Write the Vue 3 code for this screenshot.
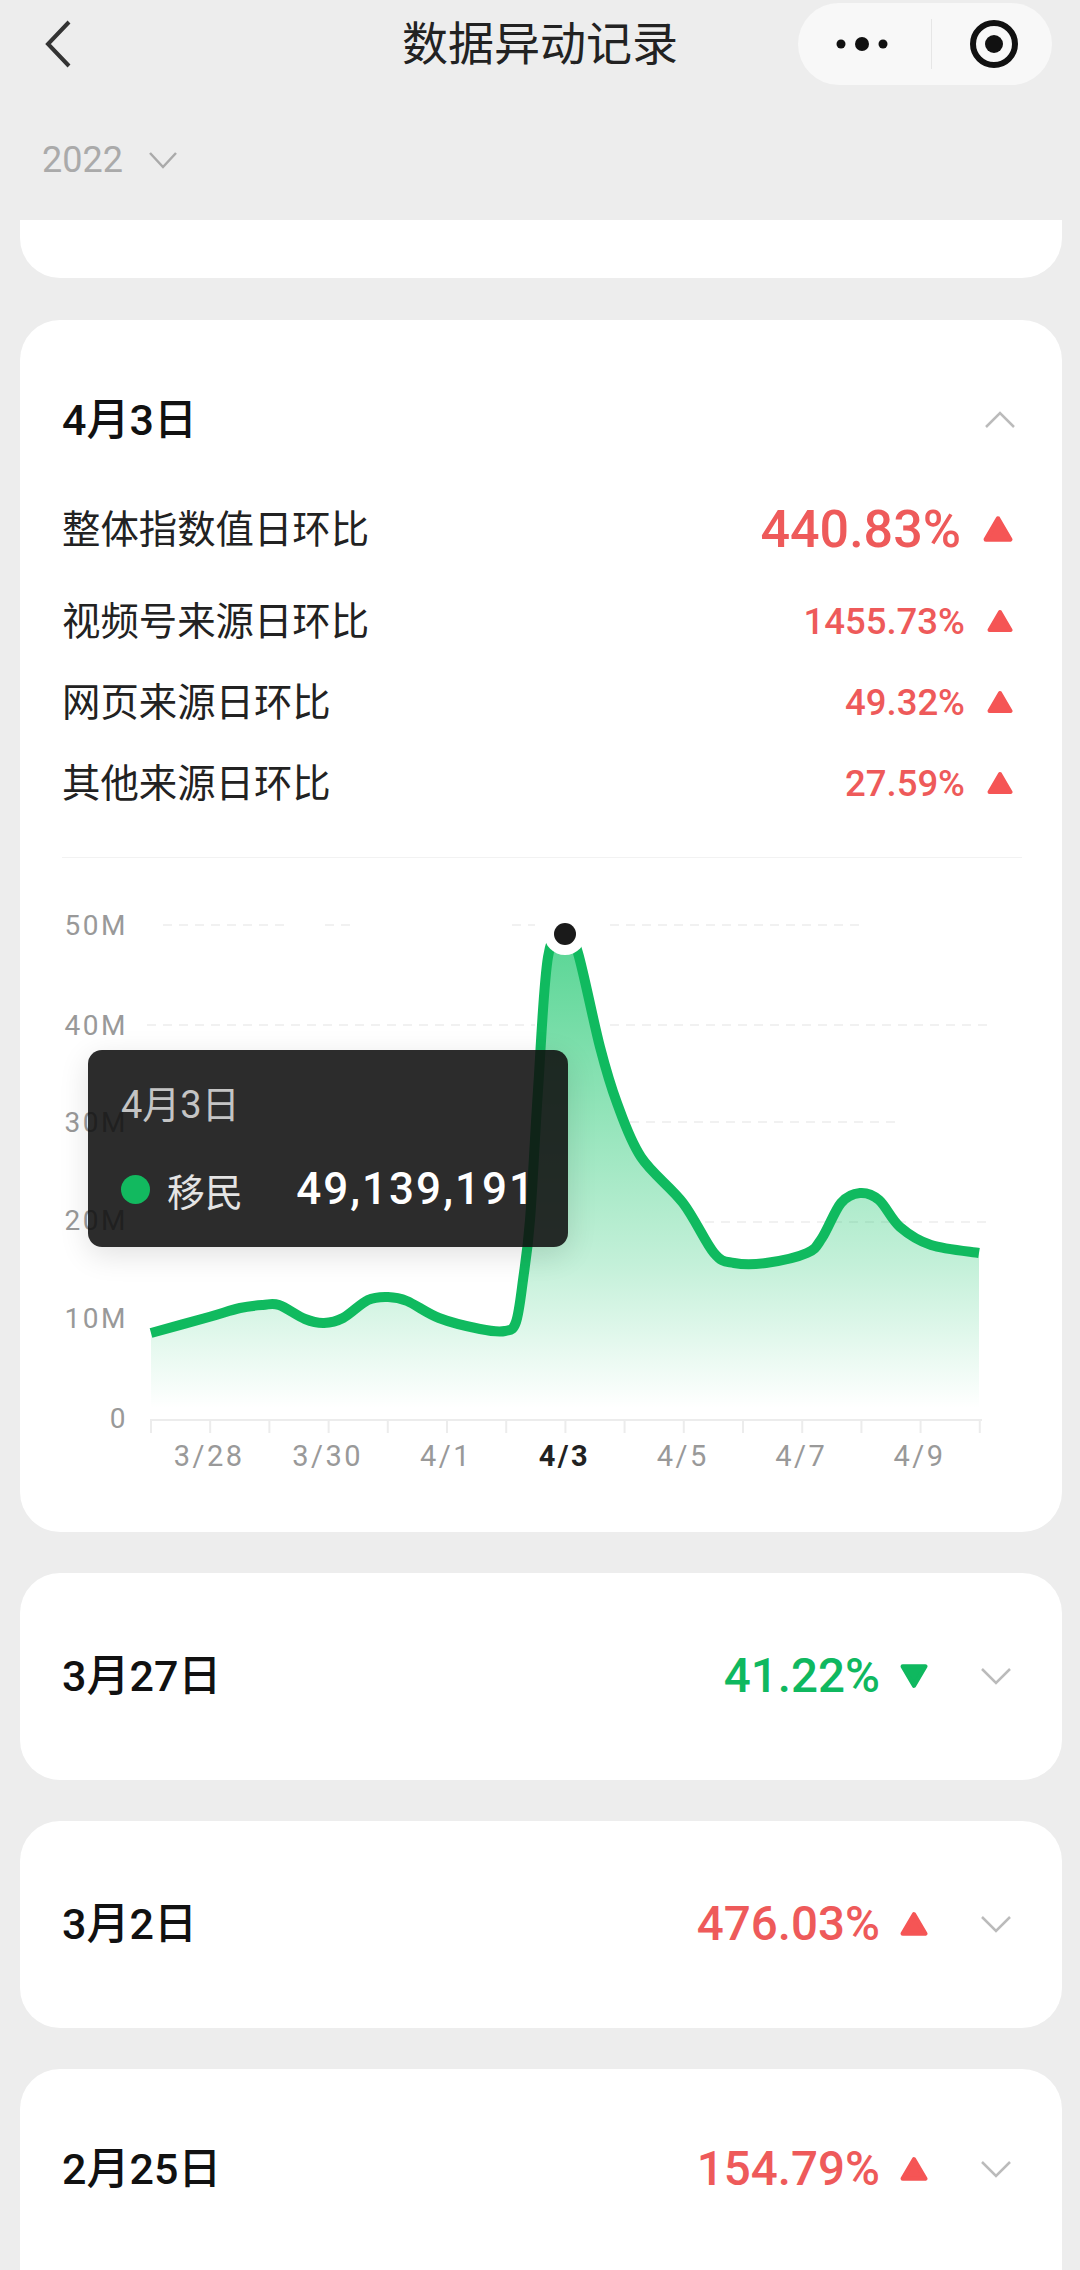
<script setup>
const details = [
  { label: '整体指数值日环比', value: '440.83%', main: true },
  { label: '视频号来源日环比', value: '1455.73%' },
  { label: '网页来源日环比', value: '49.32%' },
  { label: '其他来源日环比', value: '27.59%' },
]

const collapsed = [
  { date: '3月27日', value: '41.22%', down: true },
  { date: '3月2日', value: '476.03%' },
  { date: '2月25日', value: '154.79%' },
]

const yLabels = [
  { text: '50M', y: 925 },
  { text: '40M', y: 1025 },
  { text: '30M', y: 1122 },
  { text: '20M', y: 1220 },
  { text: '10M', y: 1318 },
  { text: '0', y: 1418 },
]

const xLabels = [
  { text: '3/28', i: 1 },
  { text: '3/30', i: 3 },
  { text: '4/1', i: 5 },
  { text: '4/3', i: 7, active: true },
  { text: '4/5', i: 9 },
  { text: '4/7', i: 11 },
  { text: '4/9', i: 13 },
]

const tickX = (i) => 151 + i * 59.2
const ticks = Array.from({ length: 15 }, (_, i) => tickX(i))

// the grid is only partly visible in the design, so keep the segments
const grid = [
  { y: 925, segs: [[163, 290], [325, 355], [512, 535], [610, 865]] },
  { y: 1025, segs: [[147, 535], [610, 990]] },
  { y: 1122, segs: [[630, 895]] },
  { y: 1222, segs: [[705, 990]] },
]

const points = [
  [151, 1333], [209, 1317], [240, 1308], [263, 1305], [279, 1305], [305, 1319], [324, 1323], [343, 1318],
  [368, 1300], [388, 1297], [407, 1301], [439, 1318], [480, 1329], [505, 1331], [516, 1322],
  [523, 1280], [530, 1220], [538, 1090], [548, 957], [565, 928], [578, 953], [600, 1047],
  [617, 1103], [641, 1157], [683, 1203], [714, 1253], [734, 1263], [766, 1263], [807, 1253],
  [822, 1238], [841, 1203], [860, 1193], [879, 1200], [900, 1227], [931, 1245], [979, 1253],
]

function smooth(pts) {
  let d = `M${pts[0][0]} ${pts[0][1]}`
  for (let i = 0; i < pts.length - 1; i++) {
    const p0 = pts[Math.max(i - 1, 0)]
    const p1 = pts[i]
    const p2 = pts[i + 1]
    const p3 = pts[Math.min(i + 2, pts.length - 1)]
    const c1x = p1[0] + (p2[0] - p0[0]) / 6
    const c1y = p1[1] + (p2[1] - p0[1]) / 6
    const c2x = p2[0] - (p3[0] - p1[0]) / 6
    const c2y = p2[1] - (p3[1] - p1[1]) / 6
    d += ` C${c1x.toFixed(1)} ${c1y.toFixed(1)} ${c2x.toFixed(1)} ${c2y.toFixed(1)} ${p2[0]} ${p2[1]}`
  }
  return d
}

const linePath = smooth(points)
const areaPath = `${linePath} L979 1408 L151 1408 Z`
</script>

<template>
  <div class="page">
    <header class="nav">
      <svg class="nav__back" width="30" height="50" viewBox="0 0 30 50">
        <path d="M26 3 L5 25 L26 47" fill="none" stroke="#333" stroke-width="4" />
      </svg>
      <h1 class="nav__title">数据异动记录</h1>
      <div class="capsule">
        <svg width="54" height="20" viewBox="0 0 54 20">
          <circle cx="6" cy="10" r="4.5" fill="#111" />
          <circle cx="27" cy="10" r="7" fill="#111" />
          <circle cx="48" cy="10" r="4.5" fill="#111" />
        </svg>
        <span class="capsule__sep" />
        <svg width="50" height="50" viewBox="0 0 50 50">
          <circle cx="25" cy="25" r="21" fill="none" stroke="#111" stroke-width="6" />
          <circle cx="25" cy="25" r="9" fill="#111" />
        </svg>
      </div>
    </header>

    <div class="year">
      <span>2022</span>
      <svg width="30" height="18" viewBox="0 0 30 18">
        <path d="M2 2 L15 16 L28 2" fill="none" stroke="#aaa" stroke-width="2.5" />
      </svg>
    </div>

    <div class="list">
      <section class="card card--stub" />

      <section class="card card--open">
        <div class="open-head">
          <span class="date">4月3日</span>
          <svg width="32" height="18" viewBox="0 0 32 18">
            <path d="M2 16 L16 2 L30 16" fill="none" stroke="#bbb" stroke-width="2.5" />
          </svg>
        </div>

        <div class="rows">
          <div v-for="row in details" :key="row.label" class="row" :class="{ 'row--main': row.main }">
            <span class="row__label">{{ row.label }}</span>
            <span class="row__value">{{ row.value }}</span>
            <svg class="tri" :width="row.main ? 30 : 26" :height="row.main ? 28 : 24" viewBox="0 0 26 24">
              <path d="M13 3 L23.5 21 L2.5 21 Z" fill="#f55555" stroke="#f55555" stroke-width="4" stroke-linejoin="round" />
            </svg>
          </div>
        </div>

        <div class="divider" />

        <div class="chart">
          <svg width="1042" height="674" viewBox="20 858 1042 674">
            <defs>
              <linearGradient id="areaFill" gradientUnits="userSpaceOnUse" x1="0" y1="930" x2="0" y2="1408">
                <stop offset="0" stop-color="#07c160" stop-opacity="0.68" />
                <stop offset="0.7" stop-color="#07c160" stop-opacity="0.24" />
                <stop offset="1" stop-color="#07c160" stop-opacity="0" />
              </linearGradient>
            </defs>

            <g v-for="g in grid" :key="g.y">
              <line
                v-for="s in g.segs"
                :key="s[0]"
                :x1="s[0]"
                :x2="s[1]"
                :y1="g.y"
                :y2="g.y"
                stroke="#f1f1f1"
                stroke-width="2"
                stroke-dasharray="9 7"
              />
            </g>

            <text v-for="l in yLabels" :key="l.text" class="axis-y" x="128" :y="l.y + 10" text-anchor="end">{{ l.text }}</text>

            <line x1="150" x2="982" y1="1420" y2="1420" stroke="#ececec" stroke-width="2" />
            <line v-for="t in ticks" :key="t" :x1="t" :x2="t" y1="1420" y2="1433" stroke="#ececec" stroke-width="2" />
            <text
              v-for="l in xLabels"
              :key="l.text"
              class="axis-x"
              :class="{ 'axis-x--active': l.active }"
              :x="tickX(l.i) - 1"
              y="1466"
              text-anchor="middle"
            >{{ l.text }}</text>

            <path :d="areaPath" fill="url(#areaFill)" />
            <path :d="linePath" fill="none" stroke="#10ba5f" stroke-width="10" stroke-linejoin="round" />

            <circle cx="565" cy="934" r="21" fill="#fff" />
            <circle cx="565" cy="934" r="11" fill="#1a1a1a" />
          </svg>

          <div class="tooltip">
            <div class="tooltip__date">4月3日</div>
            <div class="tooltip__row">
              <span class="tooltip__dot" />
              <span class="tooltip__name">移民</span>
              <span class="tooltip__num">49,139,191</span>
            </div>
          </div>
        </div>
      </section>

      <section v-for="item in collapsed" :key="item.date" class="card card--row">
        <span class="date">{{ item.date }}</span>
        <span class="card__value" :class="{ 'is-down': item.down }">{{ item.value }}</span>
        <svg class="card__tri" width="28" height="26" viewBox="0 0 26 24">
          <path
            :d="item.down ? 'M13 21 L23.5 3 L2.5 3 Z' : 'M13 3 L23.5 21 L2.5 21 Z'"
            :fill="item.down ? '#0fb85f' : '#f55555'"
            :stroke="item.down ? '#0fb85f' : '#f55555'"
            stroke-width="4"
            stroke-linejoin="round"
          />
        </svg>
        <svg class="card__chevron" width="32" height="18" viewBox="0 0 32 18">
          <path d="M2 2 L16 16 L30 2" fill="none" stroke="#bbb" stroke-width="2.5" />
        </svg>
      </section>
    </div>
  </div>
</template>

<style>
body {
  background: #ededed;
}
</style>

<style scoped>
.page {
  height: 2270px;
  overflow: hidden;
  background: #ededed;
  font-family: Roboto, "Noto Sans CJK SC", sans-serif;
  color: #111;
}

.nav {
  display: grid;
  grid-template-columns: 1fr auto 1fr;
  align-items: center;
  height: 88px;
}

.nav__back {
  margin-left: 43px;
}

.nav__title {
  margin: 0;
  font-size: 46px;
  font-weight: 400;
  line-height: 88px;
  color: #222;
}

.capsule {
  justify-self: end;
  display: flex;
  align-items: center;
  width: 254px;
  height: 82px;
  margin-right: 28px;
  padding: 0 33px 0 37px;
  box-sizing: border-box;
  justify-content: space-between;
  border-radius: 41px;
  background: #f8f8f8;
}

.capsule__sep {
  width: 1px;
  height: 50px;
  margin-left: 4px;
  background: #e6e6e6;
}

.year {
  display: flex;
  align-items: center;
  gap: 25px;
  height: 60px;
  margin: 42px 0 30px 42px;
  font-size: 36px;
  color: #aaa;
}

.list {
  display: flex;
  flex-direction: column;
  gap: 41px;
  margin: 0 18px 0 20px;
}

.card {
  flex: none;
  background: #fff;
  border-radius: 40px;
}

.card--stub {
  height: 58px;
  margin-bottom: 1px;
  border-radius: 0 0 40px 40px;
}

.card--open {
  height: 1212px;
  padding-top: 70px;
  box-sizing: border-box;
}

.card--row {
  display: flex;
  align-items: center;
  height: 207px;
  padding: 0 50px 2px 42px;
  box-sizing: border-box;
}

.card--row:last-child {
  height: 300px;
  align-items: flex-start;
  padding-top: 70px;
}

.date {
  font-size: 43px;
  font-weight: 500;
  line-height: 60px;
  color: #111;
}

.open-head {
  display: flex;
  align-items: center;
  justify-content: space-between;
  height: 60px;
  padding: 0 46px 0 42px;
}

.rows {
  display: flex;
  flex-direction: column;
  gap: 17px;
  margin-top: 47px;
  padding: 0 48px 0 42px;
}

.row {
  display: flex;
  align-items: center;
  height: 64px;
}

.row--main {
  margin-bottom: 11px;
}

.row__label {
  flex: 1;
  padding-bottom: 6px;
  font-size: 38.4px;
  color: #222;
}

.row__value {
  font-size: 36.5px;
  font-weight: 500;
  color: #ee5a5a;
}

.row--main .row__value {
  font-size: 52px;
}

.tri {
  margin-left: 22px;
  margin-right: 1px;
}

.divider {
  height: 1px;
  margin: 42px 40px 0 42px;
  background: #f2f2f2;
}

.chart {
  position: relative;
  height: 674px;
}

.chart svg {
  display: block;
}

.axis-y {
  font-size: 28px;
  letter-spacing: 2.5px;
  fill: #999;
}

.axis-x {
  font-size: 29px;
  letter-spacing: 2.5px;
  fill: #999;
}

.axis-x--active {
  font-weight: 700;
  fill: #222;
}

.tooltip {
  position: absolute;
  left: 68px;
  top: 192px;
  width: 480px;
  height: 197px;
  padding: 32px 0 0 33px;
  box-sizing: border-box;
  border-radius: 14px;
  background: rgba(15, 15, 15, 0.88);
  box-shadow: 0 8px 30px rgba(0, 0, 0, 0.12);
}

.tooltip__date {
  font-size: 38px;
  line-height: 46px;
  color: #c4c4c4;
}

.tooltip__row {
  display: flex;
  align-items: center;
  margin-top: 36px;
  height: 50px;
}

.tooltip__dot {
  width: 29px;
  height: 29px;
  border-radius: 50%;
  background: #12b95f;
}

.tooltip__name {
  margin-left: 17px;
  font-size: 38px;
  color: #e4e4e4;
}

.tooltip__num {
  position: absolute;
  right: 32px;
  font-size: 44px;
  font-weight: 500;
  letter-spacing: 2px;
  color: #fff;
}

.card__value {
  margin-left: auto;
  font-size: 47.5px;
  font-weight: 500;
  color: #ee5a5a;
}

.card__value.is-down {
  color: #0fb85f;
}

.card__tri {
  margin-left: 20px;
}

.card--row:last-child .card__value,
.card--row:last-child .card__tri,
.card--row:last-child .card__chevron {
  align-self: flex-start;
}

.card--row:last-child .card__value {
  line-height: 60px;
}

.card--row:last-child .card__tri {
  margin-top: 17px;
}

.card--row:last-child .card__chevron {
  margin-top: 21px;
}

.card__chevron {
  margin-left: 52px;
}
</style>
